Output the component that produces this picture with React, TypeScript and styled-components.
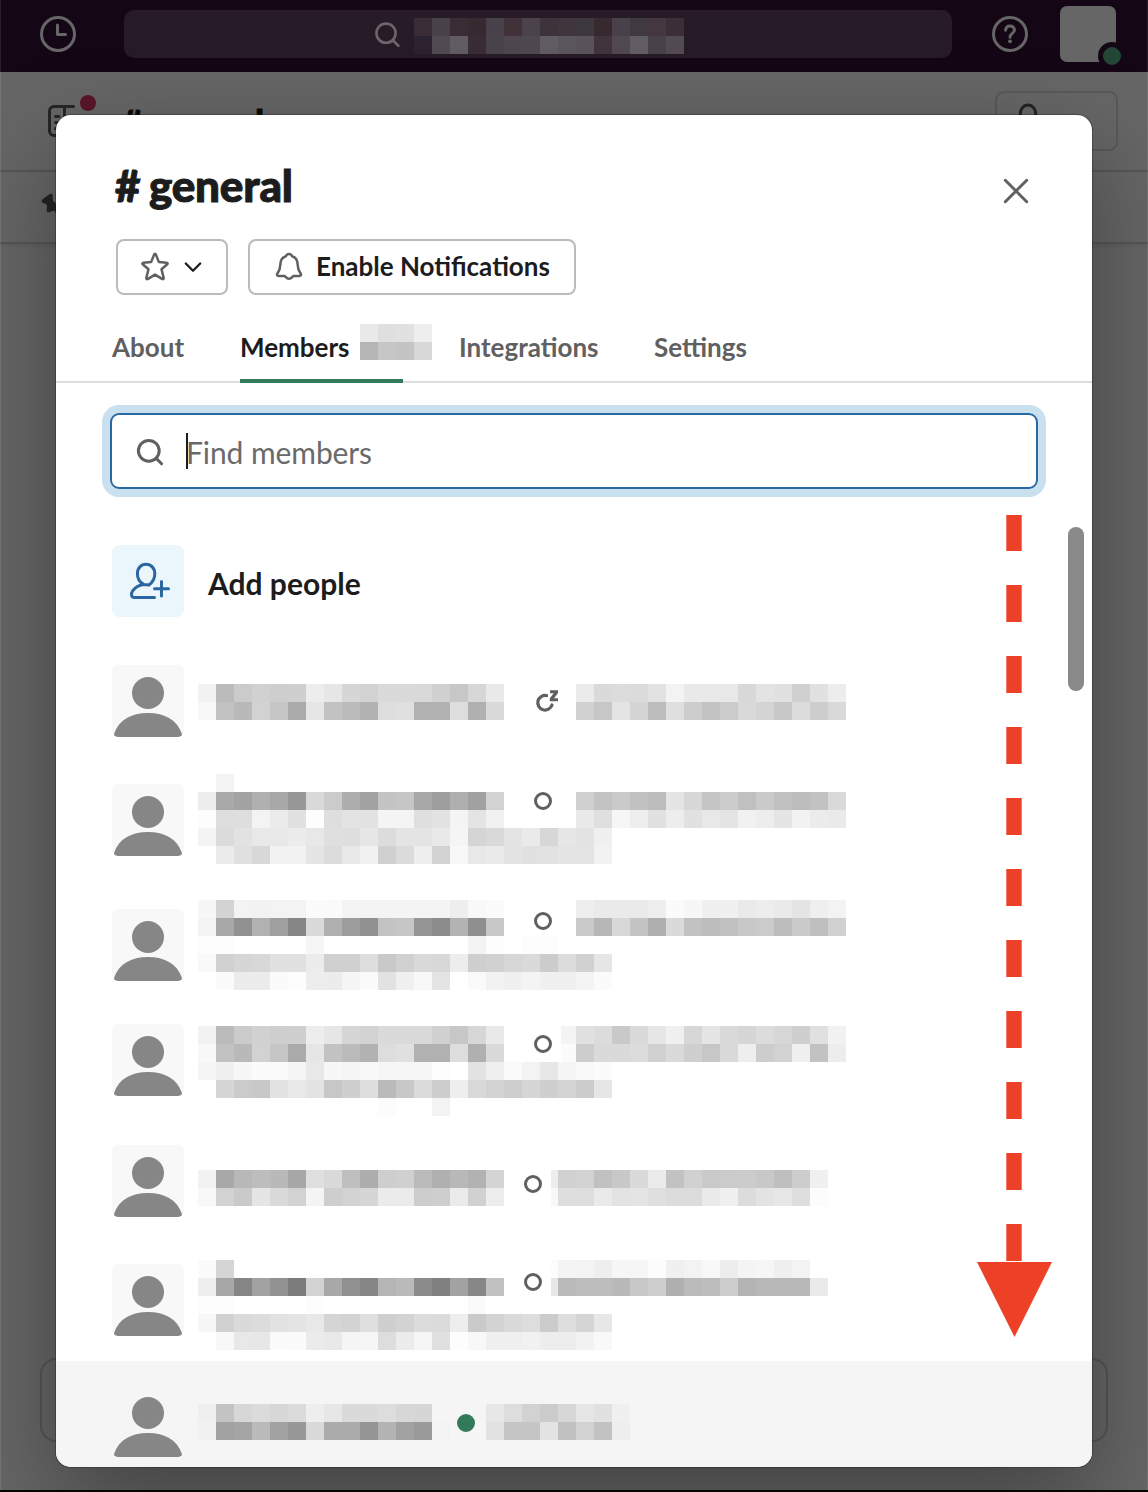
import React from "react";
import styled, { createGlobalStyle } from "styled-components";

const GlobalStyle = createGlobalStyle`
  * { box-sizing: border-box; }
  html, body { margin: 0; padding: 0; background: #000; }
  body { font-family: Lato, "Noto Sans", sans-serif; color: #1d1c1d; }
`;

const CELL = 18;

/* ---------- Workspace behind the dialog ---------- */

const Screen = styled.div`
  position: relative;
  width: 1148px;
  height: 1492px;
  overflow: hidden;
  background: #666;
  border-bottom: 2px solid #050505;
  display: flex;
  flex-direction: column;

  &::after {
    content: "";
    position: absolute;
    inset: 0;
    border: solid rgba(255, 255, 255, 0.1);
    border-width: 0 1px;
    pointer-events: none;
  }
`;

const TopBar = styled.header`
  height: 72px;
  flex: none;
  background: #140615;
  display: flex;
  align-items: flex-start;
  padding-left: 40px;
`;

const BarIcon = styled.svg<{ $left?: number }>`
  width: 36px;
  height: 36px;
  margin: 16px 0 0 ${(p) => p.$left ?? 0}px;
  flex: none;
`;

const GlobalSearch = styled.div`
  width: 828px;
  height: 48px;
  margin: 10px 0 0 48px;
  padding: 8px 0 0 250px;
  border-radius: 10px;
  background: #261b27;
  display: flex;
  gap: 12px;
  flex: none;
`;

const Profile = styled.div`
  position: relative;
  width: 56px;
  height: 56px;
  margin: 6px 0 0 32px;
  border-radius: 7px;
  background: #666;
  flex: none;
`;

const Presence = styled.span`
  position: absolute;
  left: 38px;
  top: 36px;
  width: 28px;
  height: 28px;
  border: 5px solid #140615;
  border-radius: 50%;
  background: #244634;
`;

const ChannelBar = styled.div`
  height: 100px;
  flex: none;
  border-bottom: 2px solid #565656;
  display: flex;
  padding-left: 46px;
`;

const SidebarIcon = styled.svg`
  width: 52px;
  height: 50px;
  margin-top: 20px;
`;

const ChannelName = styled.div`
  margin: 28px 0 0 24px;
  width: 873px;
  font-size: 36px;
  font-weight: 900;
  line-height: 44px;
  letter-spacing: -0.5px;
  word-spacing: -2px;
  -webkit-text-stroke: 0.8px currentColor;
  color: #0c0b0c;
`;

const MembersPill = styled.div`
  width: 123px;
  height: 60px;
  margin-top: 19px;
  border: 2px solid #595959;
  border-radius: 9px;
  padding: 9px 0 0 20px;
`;

const Bookmarks = styled.div`
  height: 72px;
  flex: none;
  border-bottom: 2px solid #555;
  box-shadow: 0 2px 4px rgba(0, 0, 0, 0.08);
  padding: 20px 0 0 40px;
`;

const Composer = styled.div`
  width: 1068px;
  height: 84px;
  margin: auto 40px 48px;
  border: 2px solid #565656;
  border-radius: 16px;
  flex: none;
`;

/* ---------- Dialog ---------- */

const Dialog = styled.section`
  position: absolute;
  left: 56px;
  top: 115px;
  width: 1036px;
  height: 1352px;
  border-radius: 15px;
  background: #fff;
  box-shadow: 0 0 0 1px rgba(20, 20, 20, 0.3), 0 36px 96px rgba(0, 0, 0, 0.35);
`;

const DialogBody = styled.div`
  height: 100%;
  border-radius: inherit;
  overflow: hidden;
  display: flex;
  flex-direction: column;
`;

const TitleRow = styled.div`
  height: 124px;
  flex: none;
  display: flex;
  justify-content: space-between;
  padding: 41px 60px 0 59px;
`;

const Title = styled.h1`
  margin: 0;
  font-size: 44px;
  line-height: 58px;
  font-weight: 900;
  letter-spacing: -0.2px;
  word-spacing: -1.6px;
  -webkit-text-stroke: 1px currentColor;
`;

const CloseIcon = styled.svg`
  width: 32px;
  height: 32px;
  margin-top: 19px;
`;

const Actions = styled.div`
  display: flex;
  gap: 20px;
  padding-left: 60px;
  flex: none;
`;

const Button = styled.button<{ $width: number }>`
  width: ${(p) => p.$width}px;
  height: 56px;
  padding: 0 0 0 22px;
  border: 2px solid #bbb;
  border-radius: 8px;
  background: #fff;
  display: flex;
  align-items: center;
  font: 700 26px/50px Lato, sans-serif;
  color: #1d1c1d;
  white-space: nowrap;
`;

const Label = styled.span`
  padding-bottom: 2px;
`;

const StarIcon = styled.svg`
  width: 30px;
  height: 32px;
`;

const ChevronIcon = styled.svg`
  width: 24px;
  height: 24px;
  margin-left: 11px;
`;

const BellIcon = styled.svg`
  width: 34px;
  height: 32px;
  margin-right: 10px;
`;

const Tabs = styled.nav`
  height: 88px;
  flex: none;
  display: flex;
  gap: 56px;
  padding-left: 56px;
  border-bottom: 2px solid #ddd;
`;

const Tab = styled.div<{ $width: number; $active?: boolean }>`
  width: ${(p) => p.$width}px;
  height: 88px;
  padding-top: 29px;
  border-bottom: 4px solid ${(p) => (p.$active ? "#337a5b" : "transparent")};
  display: flex;
  align-items: flex-start;
  font-size: 26px;
  line-height: 46px;
  font-weight: 700;
  color: ${(p) => (p.$active ? "#1d1c1d" : "#616061")};
  white-space: nowrap;
`;

const TabCount = styled.div`
  margin: 0 -29px 0 auto;
`;

const SearchField = styled.div`
  width: 928px;
  height: 76px;
  margin: 30px 0 0 54px;
  padding-left: 24px;
  border: 2px solid #2a68a3;
  border-radius: 9px;
  box-shadow: 0 0 0 8px #c9e0ef;
  display: flex;
  align-items: center;
  flex: none;
`;

const Caret = styled.span`
  width: 2px;
  height: 36px;
  margin: 0 -2px 0 22px;
  background: #1d1c1d;
  z-index: 1;
`;

const Placeholder = styled.span`
  font-size: 30px;
  line-height: 40px;
  letter-spacing: -0.08px;
  padding-top: 1px;
  color: #6b6a6b;
`;

const AddPeople = styled.div`
  height: 168px;
  flex: none;
  display: flex;
  gap: 24px;
  padding: 56px 0 0 56px;
`;

const AddTile = styled.div`
  width: 72px;
  height: 72px;
  border-radius: 8px;
  background: #ebf5fc;
`;

const AddLabel = styled.div`
  font-size: 30px;
  line-height: 40px;
  font-weight: 700;
  padding-top: 18px;
`;

const MemberRow = styled.div<{ $height: number; $hover?: boolean }>`
  height: ${(p) => p.$height}px;
  flex: none;
  display: flex;
  gap: 14px;
  padding-left: 56px;
  background: ${(p) => (p.$hover ? "#f5f5f5" : "transparent")};
`;

const Avatar = styled.svg<{ $top: number }>`
  width: 72px;
  height: 72px;
  margin-top: ${(p) => p.$top}px;
  border-radius: 6px;
  background: #f8f8f8;
  flex: none;
`;

const HoverAvatar = styled(Avatar)`
  background: transparent;
`;

const MemberText = styled.div<{ $top: number }>`
  padding-top: ${(p) => p.$top}px;
`;

const NameLine = styled.div`
  display: flex;
  align-items: flex-start;
`;

const StatusSlot = styled.div<{ $width: number; $left: number; $top: number }>`
  width: ${(p) => p.$width}px;
  height: 18px;
  padding: ${(p) => p.$top}px 0 0 ${(p) => p.$left}px;
  flex: none;
`;

const StatusDot = styled.div<{ $active?: boolean }>`
  width: 18px;
  height: 18px;
  border: 3px solid ${(p) => (p.$active ? "#337a5b" : "#616061")};
  border-radius: 50%;
  background: ${(p) => (p.$active ? "#337a5b" : "transparent")};
`;

const MosaicGrid = styled.div<{ $cols: number; $lead: number }>`
  display: grid;
  grid-template-columns: ${(p) =>
    p.$lead ? `${p.$lead}px repeat(${p.$cols - 1}, ${CELL}px)` : `repeat(${p.$cols}, ${CELL}px)`};
  grid-auto-rows: ${CELL}px;
  flex: none;
`;

const Cell = styled.i<{ $color: string }>`
  background: ${(p) => p.$color};
`;

const Scrollbar = styled.div`
  position: absolute;
  left: 1012px;
  top: 412px;
  width: 16px;
  height: 164px;
  border-radius: 8px;
  background: #898989;
`;

const ScrollArrow = styled.svg`
  position: absolute;
  left: 921px;
  top: 400px;
  width: 75px;
  height: 822px;
`;

/* Tokens are either a two-digit grey level, a full hex colour, or "-" for an empty cell. */
function Mosaic({ rows, lead = 0 }: { rows: string[]; lead?: number }) {
  const data = rows.map((r) => r.split(" "));
  const cols = Math.max(...data.map((r) => r.length));
  return (
    <MosaicGrid $cols={cols} $lead={lead}>
      {data.flatMap((r, y) =>
        Array.from({ length: cols }, (_, x) => {
          const t = r[x] ?? "-";
          const color = t === "-" ? "transparent" : t.length === 2 ? `#${t}${t}${t}` : `#${t}`;
          return <Cell key={`${y}-${x}`} $color={color} />;
        })
      )}
    </MosaicGrid>
  );
}

type Member = {
  height: number;
  avatarTop: number;
  textTop: number;
  name: string[];
  title: string[];
  detail?: string[];
  lead?: number;
  slot: [number, number, number];
  status: "away" | "snoozed" | "active";
};

const NAME_A = [
  "f2 bb cb d1 ce cf ed e6 d6 d2 da da d9 d0 c7 d7 e9",
  "f8 c2 b9 d2 c6 aa e6 c2 bb b2 dd e0 b1 b1 dd b0 da",
];

const MEMBERS: Member[] = [
  {
    height: 117, avatarTop: 8, textTop: 27, status: "snoozed", slot: [72, 31, 5],
    name: NAME_A,
    title: [
      "eb da dc db e2 f3 e9 e9 e8 d8 e3 e1 d0 e1 ed",
      "d1 c7 e4 d4 bc df cd c3 cb d9 d4 c8 dc cd d9",
    ],
  },
  {
    height: 126, avatarTop: 10, textTop: 0, status: "away", slot: [72, 30, 18],
    name: [
      "- f3",
      "ed a9 a3 b0 a8 98 d9 cb ae a3 c4 c6 a8 9e af a1 d2",
      "fd dd de f3 eb e1 fd de e3 e2 f4 f4 df e2 f4 e4 f1",
    ],
    title: [
      "-",
      "d0 c3 ca c1 bd e5 d7 c5 cc c0 ca c1 bd c2 d9",
      "e9 df f6 ee e1 ed e1 e8 e4 f1 ed e5 f2 ec ea",
    ],
    detail: [
      "f4 db e2 e8 e8 ec e8 df de e6 dc e4 e4 e9 f5 d5 d9 e4 ea d7 e6 e3 f0",
      "- eb e0 d8 f2 f2 e5 dc e8 f1 d0 db ee d2 f8 e8 ea e3 e1 e2 e4 e4 f2",
    ],
  },
  {
    height: 124, avatarTop: 9, textTop: 0, status: "away", slot: [72, 30, 12],
    name: [
      "f7 d3 f3 f2 f3 f3 fb fa f4 f4 f4 f4 f4 f4 ee f8 fb",
      "f3 a8 91 b1 9f 85 da b0 9d 90 c3 c6 95 8c b3 8f c8",
    ],
    title: [
      "ee ea ea ea ee fb f7 f0 f0 ea ed ea e4 ef f3",
      "ca b7 d8 c4 af da c2 bd c1 c8 cb bd ca bf d1",
    ],
    detail: [
      "fd fd - - - - f6 - - - - - - - - f3 fd - fd fd",
      "f9 d1 d6 d8 e1 e1 ec d0 d0 de c9 d1 d9 d8 ed cf d1 d7 da cc dc d1 e6",
      "- fa ec ec fb fd ed ec f5 fa e2 f0 f8 e4 - fa f2 f0 f4 f0 ef f4 fb",
    ],
  },
  {
    height: 121, avatarTop: 0, textTop: 2, status: "away", slot: [57, 30, 9], lead: 15,
    name: NAME_A,
    title: [
      "f4 e1 dc c9 da e6 f0 d7 e5 da d6 dc d7 cf e0 f1",
      "fb cd da da dc d1 da cf c7 d9 ee cd d2 ef c2 ed",
    ],
    detail: [
      "f5 f0 f7 fb fa f5 e8 f7 f5 f8 f6 f6 f6 fd - e2 ef fa f3 e7 f5 f9 fb",
      "- d6 cb c8 e2 e8 e3 c7 cf de ba c8 db cd ee d9 d2 ce d6 cf d4 cc e6",
      "- - - - - - - - - - fc - - f3",
    ],
  },
  {
    height: 115, avatarTop: 0, textTop: 25, status: "away", slot: [47, 20, 5], lead: 7,
    name: [
      "f2 a8 b8 bd b9 a7 df d9 bf ad ce d0 bb b0 b8 b2 d4",
      "f8 d2 ca e5 da d2 f4 ce d2 d6 eb eb cd ce eb d1 ed",
    ],
    title: [
      "ed d1 d2 c1 c8 da eb c2 d1 ca cb cc c8 bf cd f0",
      "f8 de dd ea e3 e4 df dc dc ea f0 dc e3 e7 de fc",
    ],
  },
  {
    height: 101, avatarTop: 4, textTop: 0, status: "away", slot: [47, 20, 13], lead: 7,
    name: [
      "fb d5",
      "ee a6 85 a2 92 7c d2 a8 90 86 b5 ba 8b 80 a2 87 c1",
    ],
    title: [
      "fc f4 f3 ee f6 f6 fc f0 f3 f8 ed f4 f6 ef f3",
      "e7 ba bd bd b9 c8 ce af bb bd cd b4 b8 b8 b8 ea",
    ],
    detail: [
      "fd fd - - - - fd - - - - - - - - fa",
      "f7 d1 da dc e2 e4 e8 d5 d3 df cf d3 dc db ee ca d3 d9 dd cc de d5 e7",
      "- f8 e8 e7 fa fb eb e8 f5 f6 dd ec f6 e0 fd f8 f0 ef f1 ed ed f2 f9",
    ],
  },
  {
    height: 106, avatarTop: 24, textTop: 43, status: "active", slot: [36, 7, 10],
    name: [
      "ef c3 d7 db d7 db ee e7 da da dd d7 d6 -",
      "f1 a2 a5 ba a2 98 d9 ab ab 95 b3 a2 9a f3",
    ],
    title: ["e7 dd d2 cb d7 e6 e1 f0", "e2 c5 c5 e3 c1 d2 c2 ee"],
  },
];

const SEARCH_TEXT = [
  "392c36 48414a 3a2c35 36292f 48414a 403238 4a434b 3f333b 3f353c 3d373f 38292f 48414a 403940 45373f 3b2e36",
  "2c2230 514a53 615b63 392c35 48424b 4e474f 4f4850 615b64 5b555d 5a535b 42343c 504951 625c64 484149 524b53",
];

function PersonShape() {
  return (
    <g fill="#868686">
      <circle cx="36" cy="28" r="16" />
      <path d="M2.2 68.5C7 55 19 48 36 48s29 7 33.8 20.500c.5 2-.6 3.500-3 3.500H5.200c-2.400 0-3.500-1.500-3-3.500Z" />
    </g>
  );
}

function Status({ kind }: { kind: Member["status"] }) {
  if (kind !== "snoozed") return <StatusDot $active={kind === "active"} />;
  return (
    <svg width="24" height="24" viewBox="0 0 24 24" fill="none" stroke="#616061">
      <path d="M11.600 6.600a7.300 7.300 0 1 0 5.400 9.400" strokeWidth="3.200" strokeLinecap="round" />
      <path d="M15 1.200h8v2.900l-3.900 5.100h3.900v3h-8.200v-2.900l3.900-5.100h-3.700z" fill="#616061" stroke="none" />
    </svg>
  );
}

export default function App() {
  return (
    <>
      <GlobalStyle />
      <Screen>
        <TopBar>
          <BarIcon viewBox="0 0 36 36" fill="none" stroke="#666" strokeWidth="3">
            <circle cx="18" cy="18" r="16.500" />
            <path d="M17.500 9v9.500h8" strokeLinecap="round" strokeLinejoin="round" />
          </BarIcon>
          <GlobalSearch>
            <svg width="28" height="32" viewBox="0 0 28 32" fill="none" stroke="#6b666b" strokeWidth="2.600">
              <circle cx="12" cy="15.200" r="9.600" />
              <path d="m18.700 22.200 5.700 5.600" strokeLinecap="round" />
            </svg>
            <Mosaic rows={SEARCH_TEXT} />
          </GlobalSearch>
          <BarIcon $left={40} viewBox="0 0 36 36" fill="none" stroke="#666" strokeWidth="3">
            <circle cx="18" cy="18" r="16.500" />
            <path d="M13.600 14.200c.2-2.700 1.900-4.300 4.400-4.300s4.400 1.600 4.400 4c0 3.600-4.400 3.500-4.400 7.300" strokeLinecap="round" />
            <circle cx="18" cy="25.300" r="1.900" fill="#666" stroke="none" />
          </BarIcon>
          <Profile>
            <Presence />
          </Profile>
        </TopBar>
        <ChannelBar>
          <SidebarIcon viewBox="0 0 52 50" fill="none" stroke="#262626" strokeWidth="3">
            <path d="M27.500 14.500H8a4.500 4.500 0 0 0-4.500 4.500v20A4.500 4.500 0 0 0 8 43.500h20M18.500 14.500v29" strokeLinecap="round" />
            <path d="M9.500 24.500h3.500M9.500 30.500h3.500M9.500 36.500h3.500" strokeLinecap="round" />
            <circle cx="42" cy="11" r="8" fill="#5a1628" stroke="none" />
          </SidebarIcon>
          <ChannelName># general</ChannelName>
          <MembersPill>
            <svg width="24" height="30" viewBox="0 0 24 30" fill="none" stroke="#222" strokeWidth="3">
              <ellipse cx="11" cy="12" rx="7.800" ry="9" />
            </svg>
          </MembersPill>
        </ChannelBar>
        <Bookmarks>
          <svg width="28" height="28" viewBox="0 0 28 28" fill="#242424">
            <path d="M9 2.600q2-1.600 3.600 0l.2 5.600L17 13l4 1-4.600 3.200L20 25l-1.200.6-4.600-7L8.200 20.500q-1.700-.4-1.500-2.100l.3-5.600L2.300 10.400q-1.500-1.400 0-3Z" />
          </svg>
        </Bookmarks>
        <Composer />

        <Dialog>
          <DialogBody>
            <TitleRow>
              <Title># general</Title>
              <CloseIcon viewBox="0 0 32 32" stroke="#616061" strokeWidth="3" strokeLinecap="round">
                <path d="m5.300 5.300 21.400 21.400M26.700 5.300 5.300 26.700" />
              </CloseIcon>
            </TitleRow>
            <Actions>
              <Button $width={112}>
                <StarIcon viewBox="0 0 30 32" fill="none" stroke="#616061" strokeWidth="2.500" strokeLinejoin="round">
                  <path d="M14.100 3.600Q15 1.800 15.900 3.600L18.900 11.100 26.400 11.700Q28.500 12 27 13.500L21.500 18.200 23.600 26.600Q23.900 28.900 22 27.900L15 23.600 8 27.900Q6.100 28.900 6.400 26.600L8.500 18.200 3 13.500Q1.500 12 3.600 11.700L11.100 11.100Z" />
                </StarIcon>
                <ChevronIcon viewBox="0 0 24 24" fill="none" stroke="#1d1c1d" strokeWidth="2.300" strokeLinecap="round" strokeLinejoin="round">
                  <path d="m4.800 8.500 7.200 7.300 7.200-7.300" />
                </ChevronIcon>
              </Button>
              <Button $width={328}>
                <BellIcon viewBox="0 0 34 32" fill="none" stroke="#616061" strokeWidth="2.500" strokeLinejoin="round">
                  <path d="M14 26.200l-1.500-1.200H6.500c-1.300 0-2-1.200-1.200-2.300C7 20.300 8.300 18 8.300 14 8.300 8.500 10.500 6 14 5.200 15 2.400 19 2.400 20 5.200 23.500 6 25.700 8.500 25.700 14c0 4 1.300 6.300 3 8.700.8 1.100.1 2.300-1.200 2.300H21.500l-1.500 1.200c-1.600 2.200-4.400 2.200-6 0Z" />
                </BellIcon>
                <Label>Enable Notifications</Label>
              </Button>
            </Actions>
            <Tabs>
              <Tab $width={72}>About</Tab>
              <Tab $width={163} $active>
                Members
                <TabCount>
                  <Mosaic rows={["e9 df e1 ee", "b5 c6 c4 d8"]} />
                </TabCount>
              </Tab>
              <Tab $width={139}>Integrations</Tab>
              <Tab $width={94}>Settings</Tab>
            </Tabs>
            <SearchField>
              <svg width="28" height="30" viewBox="0 0 28 30" fill="none" stroke="#616061" strokeWidth="3">
                <circle cx="12.800" cy="14.800" r="10.400" />
                <path d="m20.200 22.400 5.400 5.400" strokeLinecap="round" />
              </svg>
              <Caret />
              <Placeholder>Find members</Placeholder>
            </SearchField>
            <AddPeople>
              <AddTile>
                <svg width="72" height="72" viewBox="0 0 72 72" fill="none" stroke="#2a66a0" strokeWidth="3" strokeLinecap="round" strokeLinejoin="round">
                  <path d="M42.500 52.500H22.500c-3.200 0-4-3.500-1.700-6.800 3-4.200 7.500-5.900 10.700-6.300C27.300 37 25.400 33 25.400 28.800 25.400 23 29 19.300 34 19.300s8.800 3.700 8.800 9.500c0 4.200-2.100 8.400-5.800 11.200l-5.500-.6M49.500 36.500v14.500M42.500 43.700h14" />
                </svg>
              </AddTile>
              <AddLabel>Add people</AddLabel>
            </AddPeople>
            {MEMBERS.map((m, i) => {
              const Picture = m.status === "active" ? HoverAvatar : Avatar;
              return (
                <MemberRow key={i} $height={m.height} $hover={m.status === "active"}>
                  <Picture $top={m.avatarTop} viewBox="0 0 72 72">
                    <PersonShape />
                  </Picture>
                  <MemberText $top={m.textTop}>
                    <NameLine>
                      <Mosaic rows={m.name} />
                      <StatusSlot $width={m.slot[0]} $left={m.slot[1]} $top={m.slot[2]}>
                        <Status kind={m.status} />
                      </StatusSlot>
                      <Mosaic rows={m.title} lead={m.lead} />
                    </NameLine>
                    {m.detail && <Mosaic rows={m.detail} />}
                  </MemberText>
                </MemberRow>
              );
            })}
          </DialogBody>
          <Scrollbar />
          <ScrollArrow viewBox="0 0 75 822" fill="#ec4027">
            {Array.from({ length: 11 }, (_, i) => (
              <rect key={i} x="29.300" y={i === 0 ? 0 : i * 71 - 1} width="15.400" height={i === 0 ? 36 : 37} />
            ))}
            <path d="M0 747h75l-37.500 75Z" />
          </ScrollArrow>
        </Dialog>
      </Screen>
    </>
  );
}
